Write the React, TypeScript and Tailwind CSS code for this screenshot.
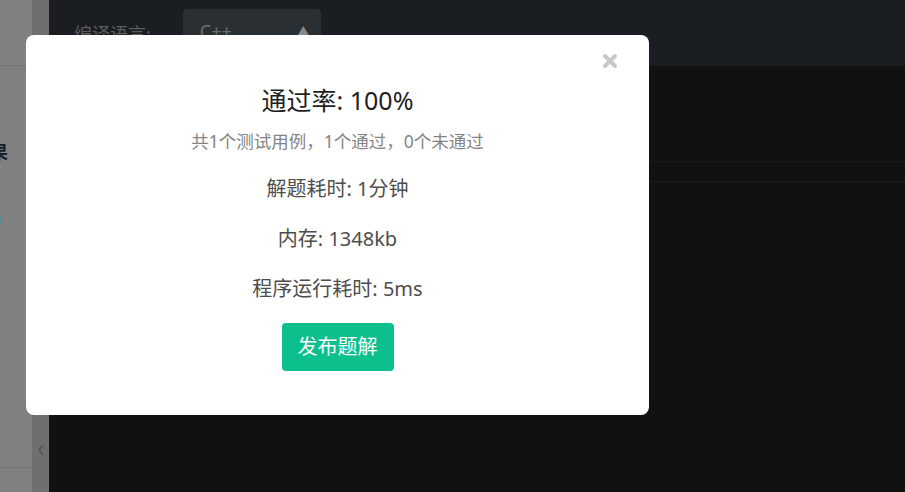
const font = { fontFamily: '"Noto Sans", "Noto Sans CJK SC", sans-serif' }

function ResultModal() {
  return (
    <div className="absolute left-[26px] top-[35px] w-[623px] h-[380px] bg-white rounded-[8px] text-center">
      <button className="absolute right-[31px] top-[18px] text-[#c8c8c8]">
        <svg width="16" height="16" viewBox="0 0 16 16">
          <path d="M3 3 L13 13 M13 3 L3 13" stroke="currentColor" strokeWidth="4" strokeLinecap="round" />
        </svg>
      </button>
      <div className="pt-[49px] text-[25px] leading-[32px] text-[#1f1f1f]">通过率: 100%</div>
      <div className="mt-[13px] text-[17.5px] leading-[24px] text-[#858585]">共1个测试用例，1个通过，0个未通过</div>
      <div className="mt-[22px] text-[20px] leading-[28px] text-[#4d4d4d]">解题耗时: 1分钟</div>
      <div className="mt-[22px] text-[20px] leading-[28px] text-[#4d4d4d]">内存: 1348kb</div>
      <div className="mt-[22px] text-[20px] leading-[28px] text-[#4d4d4d]">程序运行耗时: 5ms</div>
      <button className="mt-[20px] w-[112px] h-[48px] rounded-[4px] bg-[#0cc08e] text-white text-[20px]">
        发布题解
      </button>
    </div>
  )
}

export default function App() {
  return (
    <div className="relative w-[905px] h-[492px] overflow-hidden flex bg-[#111]" style={font}>
      {/* 左侧面板（被遮罩） */}
      <div className="w-[32px] h-full bg-[#808080] flex flex-col overflow-hidden">
        <div className="h-[66px] border-b border-[#757575] shrink-0" />
        <div className="flex justify-end pr-[24px] mt-[73px] whitespace-nowrap text-[18px] font-bold text-[#16202a]">
          测试结果
        </div>
        <div className="mt-[50px] ml-[-6px] w-[8px] h-[8px] bg-[#5a8c8c]" />
        <div className="flex-1" />
        <div className="h-[25px] border-t border-[#767676] shrink-0" />
      </div>
      <div className="w-[17px] h-full bg-[#6f6f6f] flex flex-col justify-end pb-[36px] items-center text-[#575757]">
        <svg width="8" height="12" viewBox="0 0 8 12">
          <path d="M6 1 L2 6 L6 11" fill="none" stroke="currentColor" strokeWidth="1.6" />
        </svg>
      </div>
      {/* 主区域 */}
      <div className="flex-1 flex flex-col">
        <div className="h-[66px] bg-[#1a1d21] flex items-start pl-[25px] pt-[9px] gap-[32px]">
          <span className="mt-[12px] text-[18px] text-[#5b5f63]">编译语言:</span>
          <div className="w-[138px] h-[44px] rounded-[4px] bg-[#2a2f34] flex items-center justify-between pl-[17px] pr-[12px]">
            <span className="text-[18px] text-[#6a6e72]">C++</span>
            <span className="text-[11px] text-[#8a8a8a]">▲</span>
          </div>
        </div>
        <div className="flex-1">
          <div className="h-[96px] border-b border-[#1a1a1a]" />
          <div className="h-[20px] border-b border-[#1a1a1a]" />
        </div>
      </div>
      <ResultModal />
    </div>
  )
}
